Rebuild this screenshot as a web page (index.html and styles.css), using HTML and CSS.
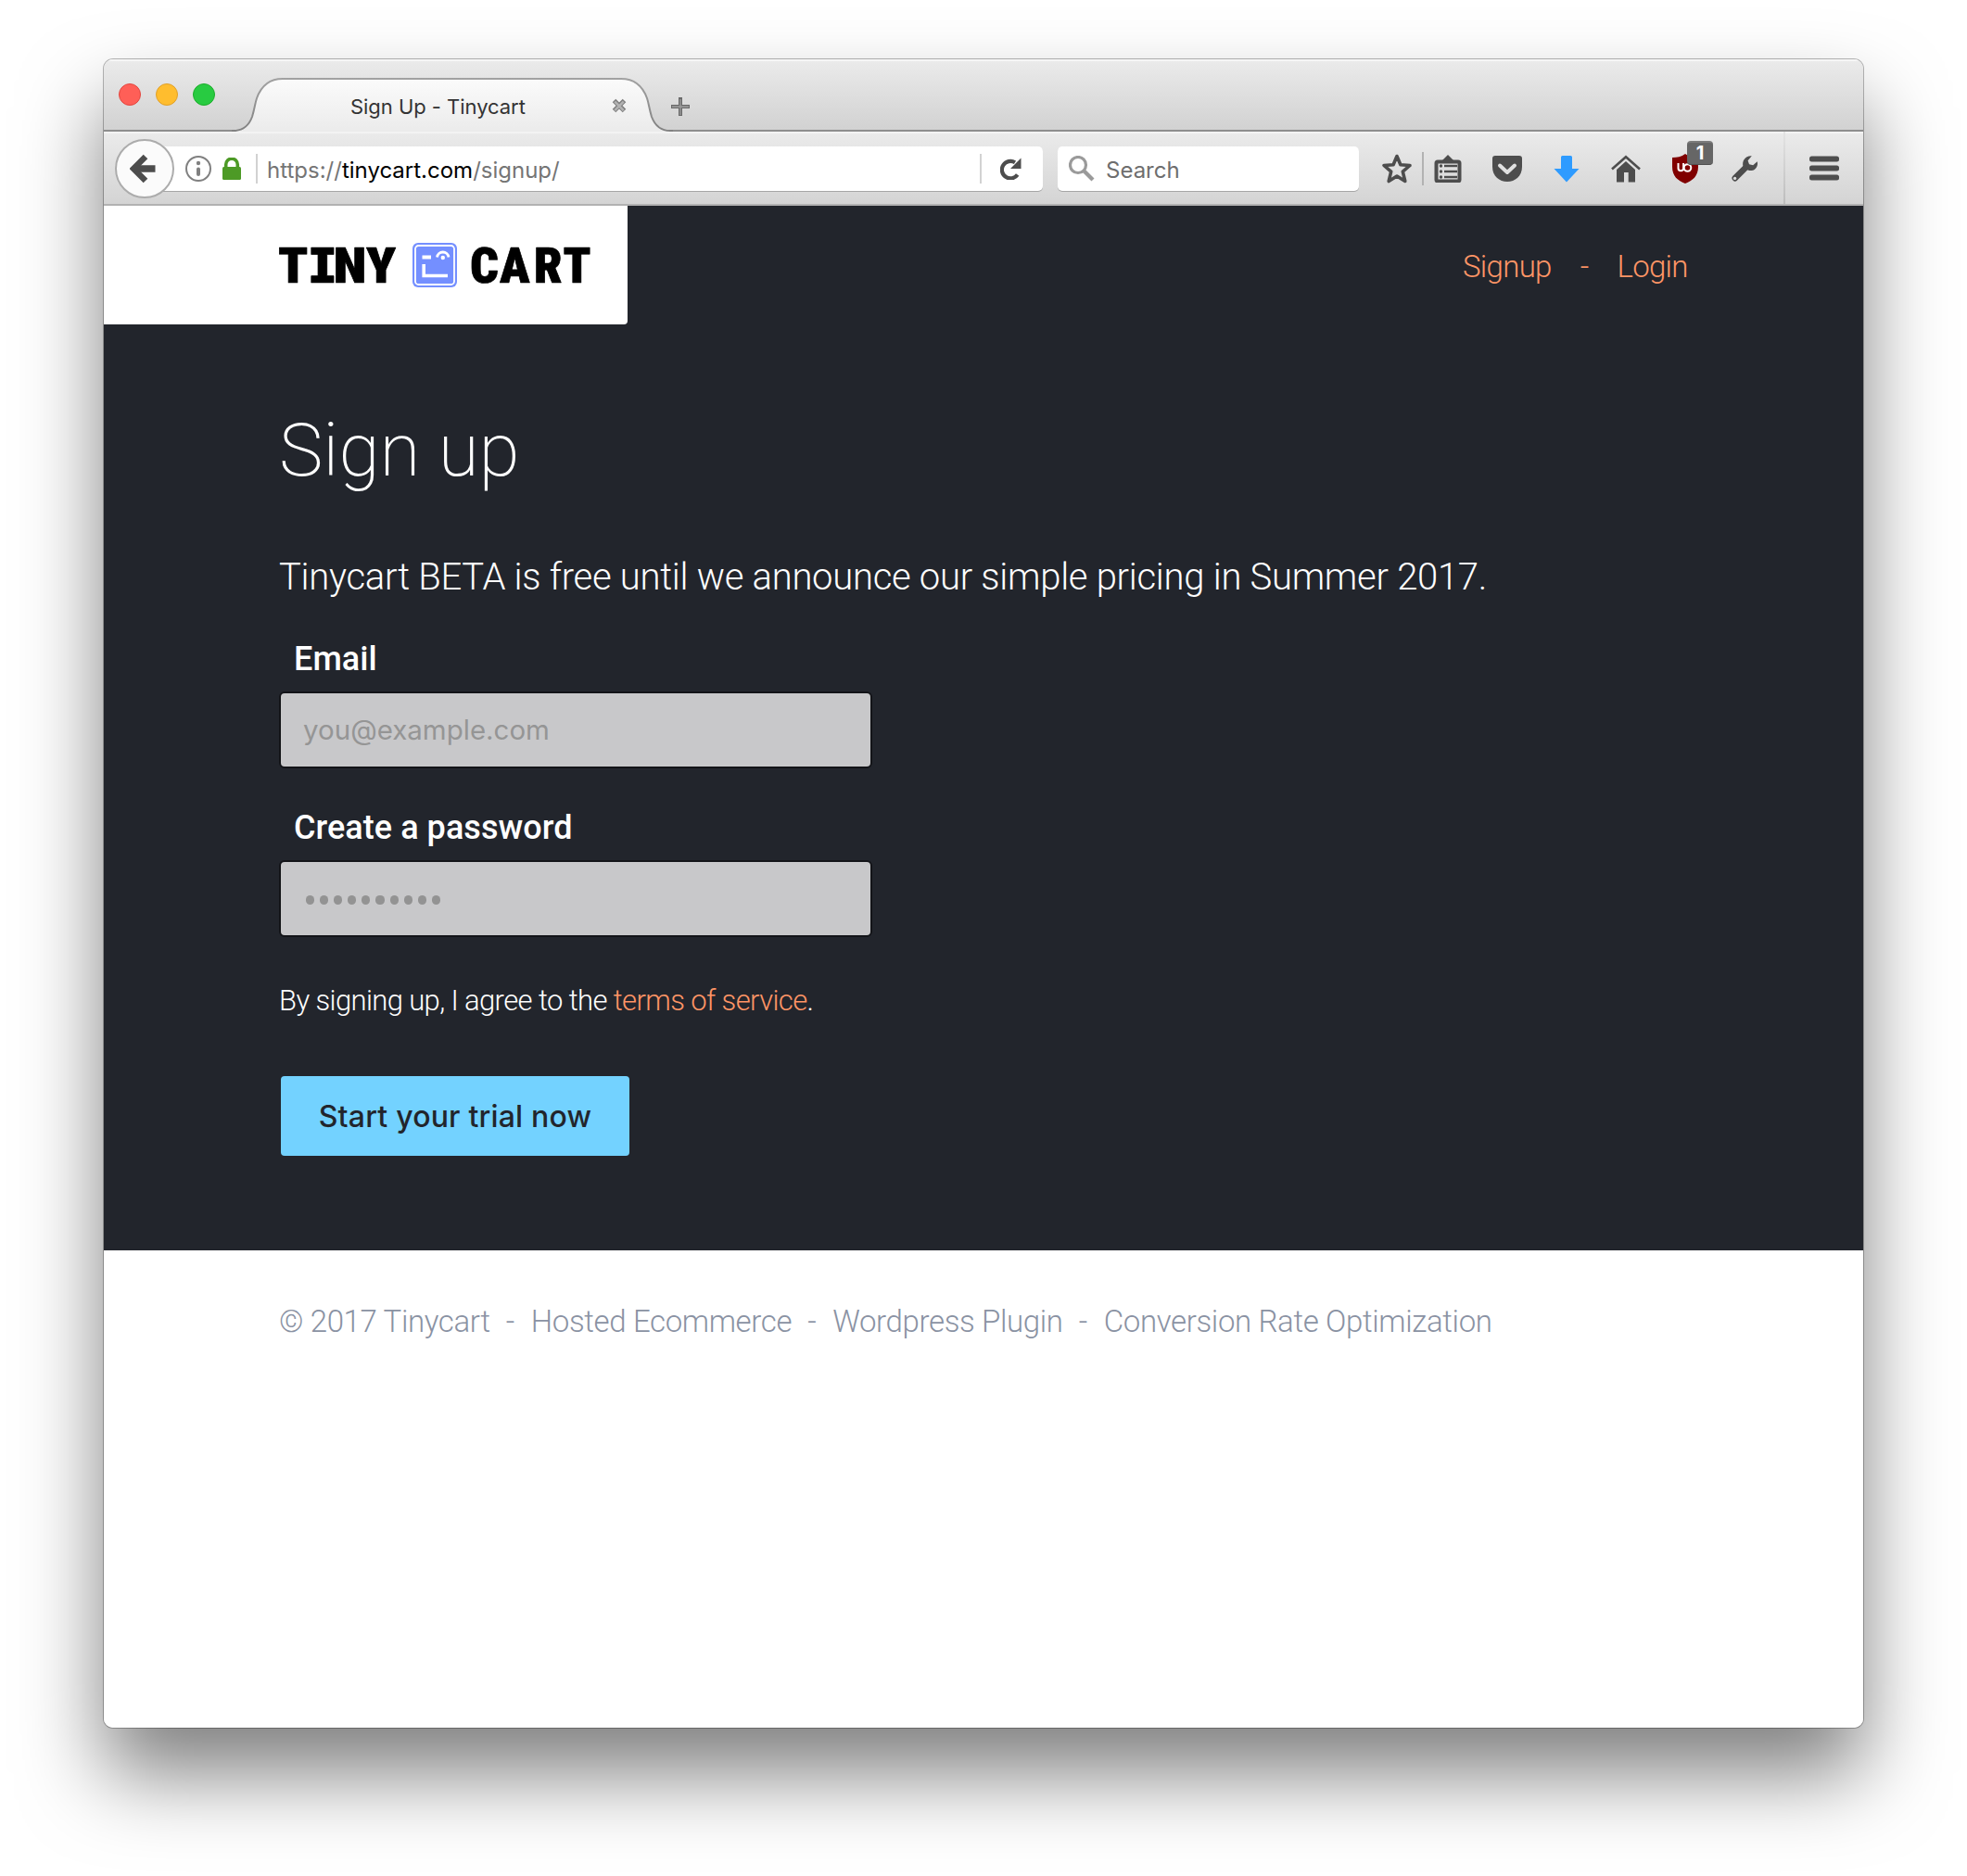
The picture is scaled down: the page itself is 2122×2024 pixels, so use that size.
FILE: index.html
```
<!DOCTYPE html>
<html lang="en">
<head>
<meta charset="utf-8">
<title>Sign Up - Tinycart</title>
<link rel="stylesheet" href="styles.css">
</head>
<body>
<div class="window">
  <div class="titlebar">
    <div class="lights"><i class="light close"></i><i class="light minimise"></i><i class="light zoom"></i></div>
    <div class="tab">
      <svg class="tab-shape" width="476" height="58" viewBox="0 0 476 58">
        <defs><linearGradient id="tabfill" x1="0" y1="0" x2="0" y2="1"><stop offset="0" stop-color="#fbfbfb"/><stop offset="1" stop-color="#ebebeb"/></linearGradient>
        <linearGradient id="tabline" gradientUnits="userSpaceOnUse" x1="0" y1="0" x2="0" y2="58"><stop offset="0" stop-color="#a2a2a2"/><stop offset="1" stop-color="#818181"/></linearGradient></defs>
        <path d="M2 58V57C14 57 19 50 22 42C25 32 25 28 27 22C32 8 41 1 55 1H420C434 1 443 8 448 22C450 28 450 32 453 42C456 50 461 57 473 57V58Z" fill="url(#tabfill)"/>
        <path d="M0 57H2C14 57 19 50 22 42C25 32 25 28 27 22C32 8 41 1 55 1H420C434 1 443 8 448 22C450 28 450 32 453 42C456 50 461 57 473 57H476" fill="none" stroke="url(#tabline)" stroke-width="2"/>
      </svg>
      <span class="tab-title">Sign Up - Tinycart</span>
      <svg class="tab-close" width="16" height="16" viewBox="0 0 16 16"><path d="M2.500 2.500L13.500 13.500M13.500 2.500L2.500 13.500" stroke="#7e7e7e" stroke-width="5"/><path d="M3.300 3.700L12.700 13.100M12.700 3.700L3.300 13.100" stroke="#b2b2b2" stroke-width="2.600"/></svg>
    </div>
    <svg class="newtab" width="20" height="20" viewBox="0 0 20 20"><path d="M8 0h4v8h8v4h-8v8H8v-8H0V8h8z" fill="#6a6a6a"/><path d="M9.300 2h1.400v7.300H19v1.800h-8.300V19H9.300v-7.900H1V9.300h8.300z" fill="#9a9a9a"/></svg>
  </div>

  <div class="toolbar">
    <div class="back"><svg width="28" height="32" viewBox="0 0 28 32"><path d="M17 3L4 16L17 29" fill="none" stroke="#4d4d4d" stroke-width="6.500" stroke-linejoin="miter"/><path d="M5 16H27.500" stroke="#4d4d4d" stroke-width="7.500"/></svg></div>
    <div class="urlbar">
      <svg class="info" width="28" height="28" viewBox="0 0 28 28"><circle cx="14" cy="14" r="13" fill="none" stroke="#808080" stroke-width="2"/><circle cx="14" cy="8" r="2.200" fill="#808080"/><rect x="12" y="12.500" width="4" height="9.500" rx="2" fill="#808080"/></svg>
      <svg class="lock" width="20" height="24" viewBox="0 0 20 24"><path d="M3.700 11V7.500a6.300 6.300 0 0 1 12.600 0V11" fill="none" stroke="#4d9a26" stroke-width="3.600"/><rect x="0" y="10" width="20" height="14" rx="1.500" fill="#4d9a26"/></svg>
      <i class="rule"></i>
      <span class="url">https://<b>tinycart.com</b>/signup/</span>
      <i class="rule"></i>
      <svg class="reload" width="24" height="24" viewBox="0 0 24 24"><path d="M18.700 18.600A9.300 9.300 0 1 1 16 5.200" fill="none" stroke="#4d4d4d" stroke-width="4.200"/><path d="M22.500 0.500V12H11Z" fill="#4d4d4d"/></svg>
    </div>
    <div class="search">
      <svg width="28" height="28" viewBox="0 0 28 28"><circle cx="10" cy="10" r="8.500" fill="none" stroke="#9a9a9a" stroke-width="3.200"/><path d="M16 16L26 26" stroke="#9a9a9a" stroke-width="4.200"/></svg>
      <span>Search</span>
    </div>
    <svg class="i-star" width="34" height="34" viewBox="0 0 34 34"><path d="M17 3.500L20.900 12.700L31 13.500L23.300 20.100L25.800 30.500L17 25L8.200 30.500L10.700 20.100L3 13.500L13.100 12.700Z" fill="none" stroke="#4d4d4d" stroke-width="3.600" stroke-linejoin="round"/></svg>
    <i class="rule tall"></i>
    <svg class="i-list" width="30" height="30" viewBox="0 0 30 30"><path d="M9 6L15 0L21 6Z" fill="#4d4d4d"/><rect x="2.500" y="7.500" width="25" height="21" rx="1.500" fill="none" stroke="#4d4d4d" stroke-width="4"/><g fill="#4d4d4d"><circle cx="7.500" cy="12" r="1.700"/><circle cx="7.500" cy="18" r="1.700"/><circle cx="7.500" cy="24" r="1.700"/><rect x="11" y="10.800" width="14" height="2.400"/><rect x="11" y="16.800" width="14" height="2.400"/><rect x="11" y="22.800" width="14" height="2.400"/></g></svg>
    <svg class="i-pocket" width="34" height="30" viewBox="0 0 34 30"><path d="M4 1H30Q33 1 33 4V13C33 23 25.500 29 17 29S1 23 1 13V4Q1 1 4 1Z" fill="#4d4d4d"/><path d="M9 11.500L17 19L25 11.500" fill="none" stroke="#e0e0e0" stroke-width="4" stroke-linecap="round" stroke-linejoin="round"/></svg>
    <svg class="i-down" width="30" height="30" viewBox="0 0 30 30"><path d="M10.500 1h9q1.500 0 1.500 1.500V15h7.500L15 29.500 1.500 15H9V2.500Q9 1 10.500 1Z" fill="#2e9bff"/></svg>
    <svg class="i-home" width="32" height="30" viewBox="0 0 32 30"><path d="M1 15.500L16 2.200L31 15.500" fill="none" stroke="#4d4d4d" stroke-width="2.600"/><path d="M6 16L16 7L26 16V29.500H18.700V19H14V29.500H6Z" fill="#4d4d4d"/></svg>
    <div class="ublock">
      <svg width="30" height="34" viewBox="0 0 30 34"><path d="M15 1C11 4 6 5 1 5V15C1 25 7 30 15 33C23 30 29 25 29 15V5C24 5 19 4 15 1Z" fill="#800000"/><path d="M7.500 11V16.500a2.800 2.800 0 0 0 5.600 0V11M13.100 11V19" fill="none" stroke="#fff" stroke-width="2"/><circle cx="17.500" cy="16" r="3.800" fill="none" stroke="#fff" stroke-width="2"/></svg>
      <span class="badge">1</span>
    </div>
    <svg class="i-wrench" width="30" height="30" viewBox="0 0 30 30"><path d="M4.800 25.200L17.500 12.500" stroke="#4d4d4d" stroke-width="6.600" stroke-linecap="round"/><path d="M22.800 1.300L18.600 6.200L20 10.200L24.200 11.200L28.700 7.200C30 11.500 27.500 16.500 22.500 17C20 17.200 18 16.500 16.500 15.500L13.500 12.500C12 7 15.500 0.800 22.800 1.300Z" fill="#4d4d4d"/><circle cx="4.600" cy="25.400" r="1.700" fill="#dcdcdc"/></svg>
    <i class="menu-rule"></i>
    <svg class="i-menu" width="32" height="28" viewBox="0 0 32 28"><g fill="#4d4d4d"><rect y="0.500" width="32" height="6" rx="2.500"/><rect y="10.500" width="32" height="6" rx="2.500"/><rect y="20.500" width="32" height="6" rx="2.500"/></g></svg>
  </div>

  <div class="page">
    <header class="site-header">
      <div class="brand">
        <svg width="360" height="84" viewBox="0 -16 360 84">
          <text class="wm" transform="scale(1.08 1)" y="45" x="0 31.500 55.300 88">T<tspan class="serif-i">I</tspan>NY</text>
          <text class="wm" y="44.500" x="207 239 276 307.500">CART</text>
          <rect x="145" y="2" width="48" height="48" rx="6" fill="#748fff"/>
          <rect x="148" y="5" width="42" height="42" rx="3.500" fill="none" stroke="#fff" stroke-width="1.800"/>
          <path d="M155.500 17.500H165" stroke="#fff" stroke-width="4"/>
          <path d="M157.200 25V37.500H183" fill="none" stroke="#fff" stroke-width="3.600"/>
          <path d="M171.500 17.500A6.300 6.300 0 0 1 184 17.500" fill="none" stroke="#fff" stroke-width="2.800"/>
          <circle cx="177.800" cy="18" r="2.200" fill="#fff"/>
        </svg>
      </div>
      <nav class="nav"><a>Signup</a><span>-</span><a>Login</a></nav>
    </header>
    <main class="content">
      <h1>Sign up</h1>
      <p class="lead">Tinycart BETA is free until we announce our simple pricing in Summer 2017.</p>
      <label class="label">Email</label>
      <div class="field">you@example.com</div>
      <label class="label second">Create a password</label>
      <div class="field dots"><i></i><i></i><i></i><i></i><i></i><i></i><i></i><i></i><i></i><i></i></div>
      <p class="terms">By signing up, I agree to the <a>terms of service</a>.</p>
      <button class="cta">Start your trial now</button>
    </main>
    <footer class="footer">
      <a>© 2017 Tinycart</a><span class="dash">-</span><a>Hosted Ecommerce</a><span class="dash">-</span><a>Wordpress Plugin</a><span class="dash">-</span><a>Conversion Rate Optimization</a>
    </footer>
  </div>
</div>
</body>
</html>
```
FILE: styles.css
```
* { box-sizing: border-box; }
body { margin: 0; padding: 64px 112px 160px; background: #fff; font-family: Roboto, sans-serif; }
svg { display: block; flex: none; }
h1, p { margin: 0; }

.window {
  display: flex; flex-direction: column;
  width: 1898px; height: 1800px;
  border-radius: 10px; overflow: hidden; background: #fff;
  box-shadow: 0 0 0 1px rgba(0,0,0,.28), 0 50px 88px rgba(0,0,0,.5);
}

.titlebar {
  display: flex; flex: none; height: 78px;
  background: linear-gradient(#8e8e8e, #8e8e8e) bottom / 100% 2px no-repeat, linear-gradient(#ebebeb, #d1d1d1);
  box-shadow: inset 0 2px 0 #f6f6f6;
}
.lights { display: flex; gap: 16px; padding: 26px 0 0 16px; width: 138px; }
.light { width: 24px; height: 24px; border-radius: 50%; border: 1px solid; }
.close { background: #ff5f57; border-color: #e2463f; }
.minimise { background: #ffbd2e; border-color: #e0a028; }
.zoom { background: #28cb41; border-color: #1dad2b; }
.tab { position: relative; width: 476px; margin-top: 20px; display: flex; font-family: Inter, sans-serif; }
.tab-shape { position: absolute; left: 0; top: 0; }
.tab-title { position: relative; margin-left: 128px; width: 282px; line-height: 30px; padding-top: 16px; font-size: 22px; color: #333; letter-spacing: -.04px; }
.tab-close { position: relative; margin-top: 22px; }
.newtab { margin: 41px 0 0 -2px; }

.toolbar {
  display: flex; flex: none; align-items: center; height: 80px; padding: 2px 0 0 12px;
  border-bottom: 2px solid #b2b2b2;
  background: linear-gradient(#ebebeb, #d4d4d4);
  box-shadow: inset 0 2px 0 #f3f3f3;
  font-family: Inter, sans-serif;
}
.back { position: relative; flex: none; width: 64px; height: 64px; border-radius: 50%; background: #fbfbfb; border: 2px solid #acacac; display: flex; align-items: center; justify-content: center; padding-right: 4px; z-index: 1; }
.urlbar { display: flex; flex: none; align-items: center; width: 969px; height: 48px; margin-left: -32px; padding: 0 22px 0 44px; background: #fff; border-radius: 5px; box-shadow: 0 1px 0 #a6a6a6; }
.lock { margin-left: 12px; }
.rule { flex: none; width: 2px; height: 32px; margin-left: 16px; background: #d2d2d2; }
.url { margin-left: 10px; width: 769px; padding-top: 2px; font-size: 24px; color: #757575; white-space: nowrap; }
.url b { font-weight: 400; color: #000; }
.url + .rule { margin-left: 0; }
.reload { margin-left: 20px; }
.search { display: flex; flex: none; align-items: center; width: 325px; height: 48px; margin-left: 16px; padding-left: 12px; background: #fff; border-radius: 5px; box-shadow: 0 1px 0 #a6a6a6; font-size: 24px; color: #6e6e6e; }
.search span { margin-left: 12px; padding-top: 2px; }
.i-star { margin-left: 24px; }
.tall { height: 36px; margin-left: 10px; background: #b2b2b2; }
.i-list { margin-left: 11px; }
.i-pocket { margin-left: 32px; }
.i-down { margin-left: 32px; }
.i-home { margin-left: 33px; }
.ublock { position: relative; margin-left: 33px; }
.badge { position: absolute; left: 17px; top: -13px; width: 28px; height: 26px; border-radius: 4px; background: #666; border-top: 2px solid #7c7c7c; border-bottom: 1px solid #505050; color: #fff; font: 700 20px/23px Inter, sans-serif; text-align: center; }
.i-wrench { margin-left: 34px; }
.menu-rule { flex: none; width: 2px; height: 78px; margin: -2px 0 0 27px; background: linear-gradient(#e4e4e4, #bcbcbc); }
.i-menu { margin-left: 26px; }

.page { flex: 1; background: #fff; }
.site-header { display: flex; justify-content: space-between; height: 128px; background: #22252c; }
.brand { width: 565px; height: 128px; padding: 22px 0 0 188px; background: #fff; border-bottom-right-radius: 4px; }
.wm { font: 900 54px Roboto, sans-serif; font-stretch: 85%; stroke: #000; stroke-width: .7px; stroke-linejoin: round; }
.serif-i { font-family: Inter, sans-serif; font-size: 52.500px; font-weight: 800; font-feature-settings: "cv08"; }
.nav { display: flex; width: 432px; height: 128px; line-height: 132px; font-size: 33px; font-weight: 300; letter-spacing: -.7px; color: #ff9566; }
.nav span { margin: 0 31px; }

.content { height: 999px; padding: 88px 0 0 189px; background: #22252c; color: #fff; }
h1 { font-size: 80px; line-height: 96px; font-weight: 200; }
.lead { margin-top: 61px; font-size: 40px; line-height: 56px; font-weight: 300; letter-spacing: -.28px; }
.label { display: block; margin: 36px 0 0 16px; font-size: 36px; line-height: 48px; font-weight: 500; letter-spacing: .05px; }
.label.second { margin-top: 40px; }
.field { display: flex; align-items: center; width: 640px; height: 83px; margin-top: 11px; padding: 0 0 2px 24px; background: #c8c8ca; border: 2px solid #131418; border-radius: 6px; font: 400 29.500px Inter, sans-serif; color: #959595; }
.dots { gap: 6px; padding: 3px 0 0 27px; }
.dots i { width: 9.100px; height: 9.100px; border-radius: 50%; background: #939393; }
.terms { margin-top: 49px; font-size: 31px; line-height: 40px; font-weight: 300; letter-spacing: -.62px; }
.terms a { color: #ff9566; }
.cta { display: block; width: 376px; height: 86px; margin: 61px 0 0 2px; border: 0; border-radius: 4px; background: #73d2ff; color: #22252c; font: 500 32px Inter, sans-serif; padding: 0; letter-spacing: .2px; }

.footer { display: flex; padding: 53px 0 0 189px; font-size: 33px; line-height: 48px; font-weight: 300; color: #8a92a3; letter-spacing: -.36px; white-space: nowrap; }
.dash { margin: 0 18px 0 17px; }
```
